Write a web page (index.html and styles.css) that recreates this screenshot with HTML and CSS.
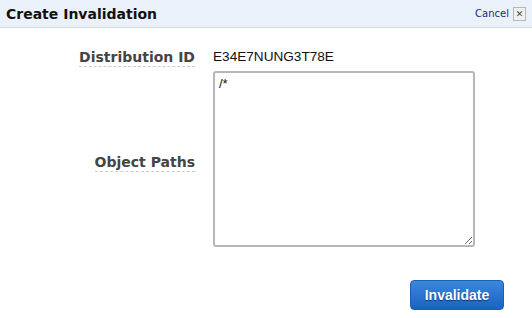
FILE: index.html
```html
<!DOCTYPE html>
<html lang="en">
<head>
  <meta charset="UTF-8">
  <title>Create Invalidation</title>
  <link rel="stylesheet" href="styles.css">
</head>
<body>

  <div class="dialog">
    <div class="dialog-header">
      <h1>Create Invalidation</h1>
      <a class="cancel" href="#">Cancel <span class="close-box">&#x2715;</span></a>
    </div>

    <form class="dialog-body">
      <div class="row">
        <label class="field-label">Distribution ID</label>
        <div class="field-value">E34E7NUNG3T78E</div>
      </div>

      <div class="row row-paths">
        <label class="field-label" for="paths">Object Paths</label>
        <textarea id="paths">/*</textarea>
      </div>

      <div class="actions">
        <button type="button">Invalidate</button>
      </div>
    </form>
  </div>

</body>
</html>
```

FILE: styles.css
```css
body {
  margin: 0;
  background: #fff;
  font-family: "DejaVu Sans", Verdana, sans-serif;
  color: #222;
}
.dialog {
  width: 532px;
}
.dialog-header {
  display: flex;
  align-items: center;
  justify-content: space-between;
  height: 27px;
  padding: 0 6px;
  background: #eaf1fb;
  border-bottom: 1px solid #c9dcf2;
}
.dialog-header h1 {
  margin: 0;
  font-size: 14px;
  font-weight: bold;
  color: #111;
}
.cancel {
  display: flex;
  align-items: center;
  gap: 4px;
  font-size: 10px;
  color: #1a2d7c;
  text-decoration: none;
}
.close-box {
  display: inline-flex;
  align-items: center;
  justify-content: center;
  width: 11px;
  height: 12px;
  border: 1px solid #b8b8b8;
  background: #f0f0f0;
  color: #444;
  font-size: 9px;
  font-weight: bold;
}
.dialog-body {
  padding-top: 18px;
}
.row {
  display: grid;
  grid-template-columns: 195px 262px;
  column-gap: 18px;
  align-items: center;
}
.field-label {
  justify-self: end;
  margin-top: 3px;
  font-size: 14px;
  font-weight: bold;
  color: #444;
  border-bottom: 1px dashed #ccc;
  padding-bottom: 1px;
}
.field-value {
  font-family: "Liberation Sans", Arial, sans-serif;
  font-size: 13.6px;
  color: #111;
}
.row-paths {
  margin-top: 4px;
}
.row-paths .field-label {
  margin-top: 8px;
}
textarea {
  box-sizing: border-box;
  width: 262px;
  height: 176px;
  margin: 0;
  padding: 3px 4px;
  border: 2px solid #b7b7b7;
  border-radius: 3px;
  font-family: "Liberation Sans", Arial, sans-serif;
  font-size: 13px;
  color: #111;
}
.actions {
  display: flex;
  justify-content: flex-end;
  padding: 33px 28px 0 0;
}
button {
  width: 94px;
  height: 30px;
  border: 1px solid #1c5eb0;
  border-radius: 4px;
  background: linear-gradient(#3a88de, #1a62c0);
  color: #fff;
  font-family: "Liberation Sans", Arial, sans-serif;
  font-size: 14px;
  font-weight: bold;
  text-shadow: 0 1px 1px #0b3470;
}
```
